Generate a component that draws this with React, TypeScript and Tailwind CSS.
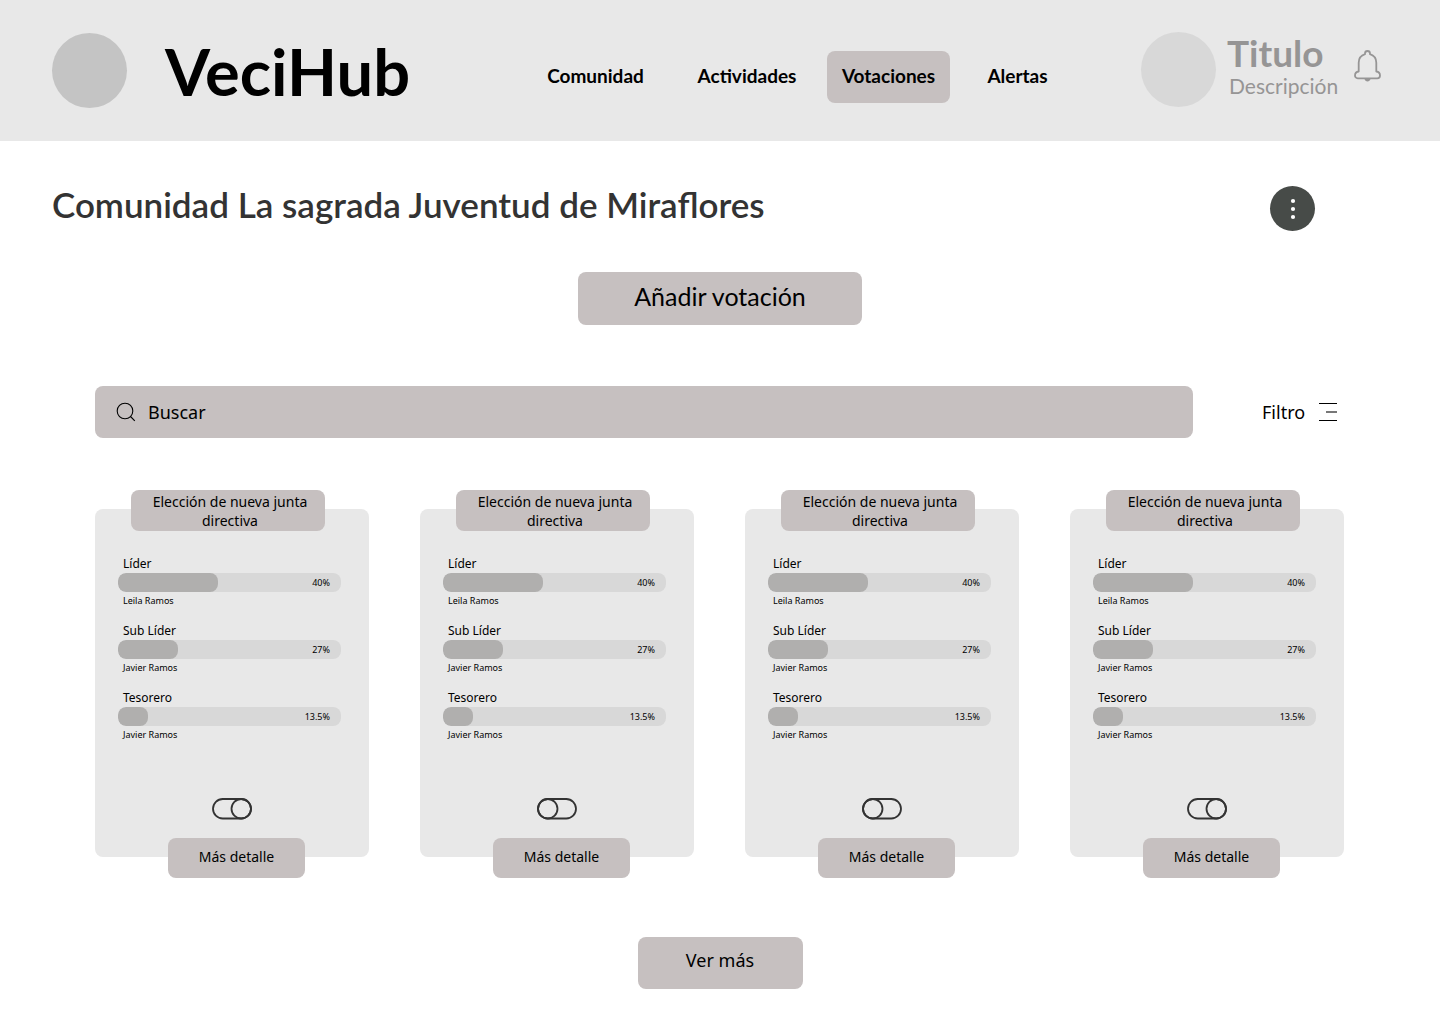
import { useState } from "react";

const navItems = [
  { label: "Comunidad", box: "w-[127px] mr-2" },
  { label: "Actividades", box: "w-[130px]" },
  { label: "Votaciones", box: "w-[123px] mr-1.5 bg-[#c6c0c0]" },
  { label: "Alertas", box: "w-[93px]" },
];

const results = [
  { role: "Líder", name: "Leila Ramos", share: "40%", fill: 45 },
  { role: "Sub Líder", name: "Javier Ramos", share: "27%", fill: 27 },
  { role: "Tesorero", name: "Javier Ramos", share: "13.5%", fill: 13.5 },
];

const polls = [
  { id: 1, active: true },
  { id: 2, active: false },
  { id: 3, active: false },
  { id: 4, active: true },
];

function BellIcon() {
  return (
    <svg width="27" height="32" viewBox="0 0 27 32" fill="none" stroke="#969595" strokeWidth="1.8" strokeLinejoin="round" aria-hidden="true">
      <path d="M11 4.2V3.5a2.5 2.5 0 0 1 5 0v.7c4 1.3 6.3 4.6 6.3 8.6V21.5c2 .3 3.7 1.5 3.7 3.9 0 1.7-1.1 2.9-2.7 2.9H3.7C2.1 28.3 1 27.1 1 25.4c0-2.4 1.7-3.6 3.7-3.9V12.8C4.7 8.8 7 5.5 11 4.2Z" />
      <path d="M10.5 29h6c-.4 1.5-1.5 2.4-3 2.4s-2.6-.9-3-2.4Z" fill="#969595" stroke="none" />
    </svg>
  );
}

function PollCard({ initial }: { initial: boolean }) {
  const [active, setActive] = useState(initial);
  return (
    <article className="mt-[19px] flex h-[348px] flex-col rounded-lg bg-[#e8e8e8]">
      <h2 className="-mt-[19px] ml-9 flex h-[41px] w-[194px] shrink-0 items-center justify-center rounded-lg bg-[#c6c0c0] pl-1 text-center text-[14px] leading-[19px]">
        <span className="w-[170px]">Elección de nueva junta directiva</span>
      </h2>
      <ul className="mt-6 mr-7 ml-[23px]">
        {results.map((r) => (
          <li key={r.role} className="mb-[11px] h-14">
            <p className="h-[18px] pl-[5px] text-[12px] leading-[17px]">{r.role}</p>
            <div className="relative h-[19px] overflow-hidden rounded-lg bg-[#d8d8d8]">
              <div className="h-full rounded-lg bg-[#b0afae]" style={{ width: `${r.fill}%` }} />
              <span className="absolute inset-y-0 right-[11px] text-[9px] leading-[19px]">{r.share}</span>
            </div>
            <p className="pl-[5px] text-[9px] leading-[18px]">{r.name}</p>
          </li>
        ))}
      </ul>
      <label className="mt-auto mb-[18px] cursor-pointer self-center">
        <input type="checkbox" className="peer sr-only" aria-label="Votación activa" checked={active} onChange={(e) => setActive(e.target.checked)} />
        <svg width="40" height="22" viewBox="0 0 40 22" fill="none" stroke="#333" strokeWidth="1.8" aria-hidden="true" className="block">
          <rect x="1" y="1" width="38" height="19.5" rx="9.75" />
          <circle cx={active ? 29.25 : 10.75} cy="10.75" r="9.75" />
        </svg>
      </label>
      <button type="button" className="-mb-[21px] ml-[73px] h-10 w-[137px] shrink-0 rounded-lg bg-[#c6c0c0] pb-1 text-[14px]">
        Más detalle
      </button>
    </article>
  );
}

export default function App() {
  return (
    <div className="min-h-screen bg-white pb-[35px] font-['Noto_Sans',sans-serif] text-black">
      <header className="flex h-[141px] items-center bg-[#e8e8e8] pr-[59px] pl-[52px]">
        <div className="flex w-[480px] shrink-0 items-center">
          <div className="size-[75px] rounded-full bg-[#c4c4c4]" />
          <span className="ml-[38px] pt-0.5 font-['Lato',sans-serif] text-[65px] leading-none font-bold">VeciHub</span>
        </div>
        <nav className="mt-3 flex gap-[15px] font-['Lato',sans-serif] text-[19px] font-bold">
          {navItems.map((n) => (
            <a key={n.label} href="#" className={`flex h-[52px] items-center justify-center rounded-lg ${n.box}`}>
              {n.label}
            </a>
          ))}
        </nav>
        <div className="mb-0.5 ml-auto flex items-center font-['Lato',sans-serif] text-[#969595]">
          <div className="size-[75px] rounded-full bg-[#d8d8d8]" />
          <div className="mb-1 ml-[11px] w-[127px]">
            <p className="text-[37px] leading-9 font-bold">Titulo</p>
            <p className="pl-0.5 text-[21px] leading-[30px]">Descripción</p>
          </div>
          <button type="button" aria-label="Notificaciones" className="mb-2">
            <BellIcon />
          </button>
        </div>
      </header>

      <main>
        <div className="mt-[45px] mr-[125px] ml-[52px] flex items-start justify-between">
          <h1 className="font-['Lato',sans-serif] text-[35px] leading-9 font-semibold text-[#333]">
            Comunidad La sagrada Juventud de Miraflores
          </h1>
          <button type="button" aria-label="Más opciones" className="flex size-[45px] items-center justify-center rounded-full bg-[#474b48]">
            <svg width="6" height="22" viewBox="0 0 6 22" fill="#fff" aria-hidden="true">
              <circle cx="3" cy="3" r="2.1" />
              <circle cx="3" cy="11" r="2.1" />
              <circle cx="3" cy="19" r="2.1" />
            </svg>
          </button>
        </div>

        <button type="button" className="mx-auto mt-[41px] block h-[53px] w-[284px] rounded-lg bg-[#c6c0c0] pb-1 font-['Lato',sans-serif] text-[25px]">
          Añadir votación
        </button>

        <div className="mt-[61px] mr-[103px] ml-[95px] flex items-center">
          <label className="flex h-[52px] flex-1 items-center rounded-lg bg-[#c6c0c0] pl-[21px]">
            <svg width="20" height="20" viewBox="0 0 20 20" fill="none" stroke="#000" strokeWidth="1.1" aria-hidden="true">
              <circle cx="9" cy="9" r="7.8" />
              <path d="M14.5 14.5 18.8 18.8" />
            </svg>
            <input type="text" aria-label="Buscar" placeholder="Buscar" className="ml-3 flex-1 bg-transparent text-[18px] outline-none placeholder:text-black" />
          </label>
          <button type="button" className="ml-[69px] flex w-[75px] items-center justify-between text-[18px]">
            Filtro
            <svg width="18" height="19" viewBox="0 0 18 19" aria-hidden="true">
              <path d="M0 .5H18M0 17.5H18" stroke="#000" />
              <path d="M7 9H18" stroke="#777" strokeWidth="2" />
            </svg>
          </button>
        </div>

        <section className="mt-[52px] mr-24 ml-[95px] grid grid-cols-4 gap-[51px]">
          {polls.map((p) => (
            <PollCard key={p.id} initial={p.active} />
          ))}
        </section>

        <button type="button" className="mx-auto mt-20 block h-[52px] w-[165px] rounded-lg bg-[#c6c0c0] pb-1.5 text-[18px]">
          Ver más
        </button>
      </main>
    </div>
  );
}
